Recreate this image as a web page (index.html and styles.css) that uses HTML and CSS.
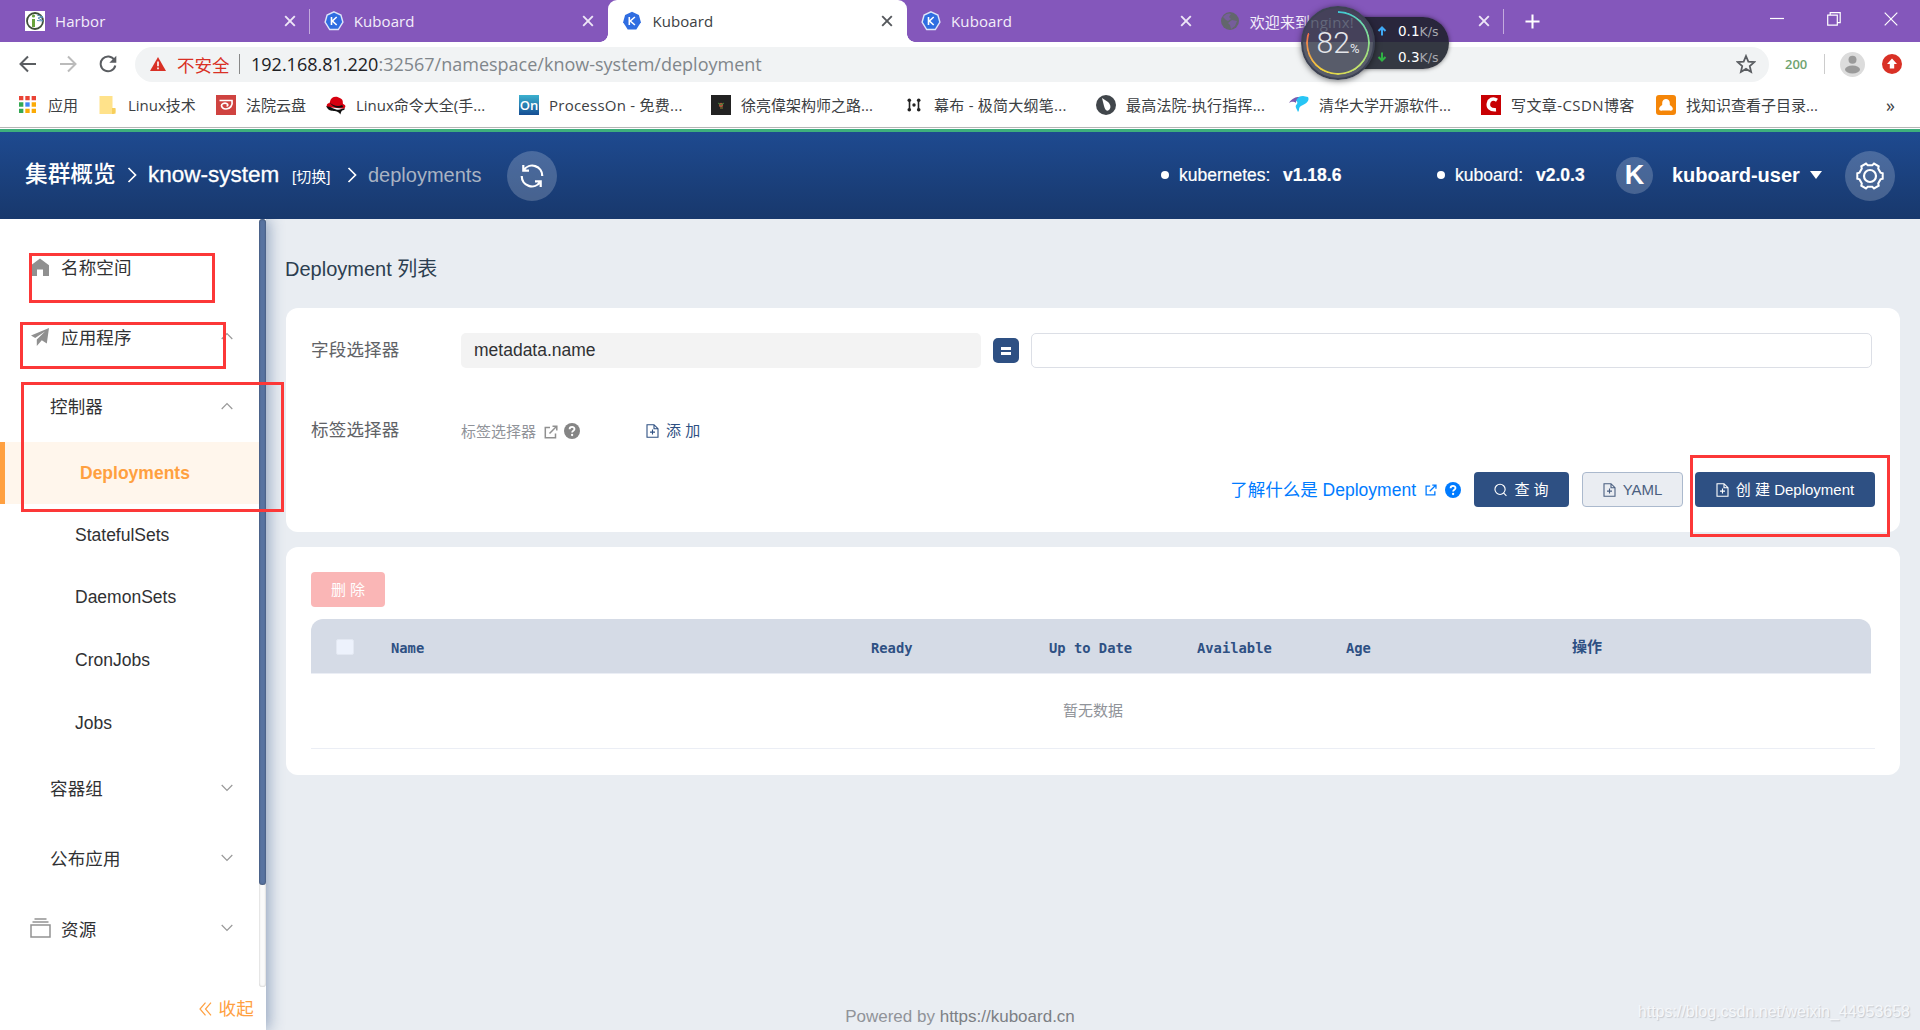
FILE: index.html
```html
<!DOCTYPE html>
<html lang="zh-CN">
<head>
    <meta charset="UTF-8">
    <title>Kuboard</title>
    <link rel="stylesheet" href="styles.css">
</head>
<body>
    <!-- shared icons -->
    <svg class="defs" width="0" height="0">
        <symbol id="i-kuboard" viewBox="0 0 20 20">
            <path d="M10 .8l6.9 3.2 2 7.2-4.6 7.3H5.7L1.1 11.2l2-7.2z" fill="#2f6de1"/>
            <path d="M7.3 6v8M12.9 6l-4.6 4 4.6 4" fill="none" stroke="#fff" stroke-width="1.6"/>
        </symbol>
        <symbol id="i-kuboard-line" viewBox="0 0 20 20">
            <path d="M10 .8l6.9 3.2 2 7.2-4.6 7.3H5.7L1.1 11.2l2-7.2z" fill="#2f6de1" stroke="#dfe6fa" stroke-width="1.4"/>
            <path d="M7.5 6v8M12.7 6l-4.3 4 4.3 4" fill="none" stroke="#fff" stroke-width="1.6"/>
        </symbol>
        <symbol id="i-close" viewBox="0 0 12 12">
            <path d="M1.2 1.2l9.6 9.6M10.8 1.2l-9.6 9.6" fill="none" stroke="currentColor" stroke-width="1.9"/>
        </symbol>
        <symbol id="i-arrow" viewBox="0 0 18 18">
            <path d="M17 9H2M9 1.5L1.5 9 9 16.5" fill="none" stroke="currentColor" stroke-width="2"/>
        </symbol>
        <symbol id="i-down" viewBox="0 0 12 8">
            <path d="M.7 1L6 6.4 11.3 1" fill="none" stroke="#999" stroke-width="1.2"/>
        </symbol>
        <symbol id="i-up" viewBox="0 0 12 8">
            <path d="M.7 7L6 1.6 11.3 7" fill="none" stroke="#999" stroke-width="1.2"/>
        </symbol>
        <symbol id="i-crumb" viewBox="0 0 10 16">
            <path d="M1.5 1l7 7-7 7" fill="none" stroke="#fff" stroke-width="1.7"/>
        </symbol>
        <symbol id="i-out" viewBox="0 0 14 14">
            <path d="M6 2.5H1.3v10.2h10.2V8.5M5.5 8.5L12.2 1.8M8.5 1.2h4.3v4.3" fill="none" stroke="currentColor" stroke-width="1.5"/>
        </symbol>
        <symbol id="i-help" viewBox="0 0 16 16">
            <circle cx="8" cy="8" r="8" fill="currentColor"/>
            <path d="M5.6 6.3c0-3.2 4.9-3.1 4.9-.2 0 1.6-2.4 1.7-2.4 3.4" fill="none" stroke="#fff" stroke-width="1.8"/>
            <circle cx="8.1" cy="12" r="1.15" fill="#fff"/>
        </symbol>
        <symbol id="i-doc" viewBox="0 0 13 14">
            <path d="M1 .7h7l4 4v8.6H1zM8 .7v4h4M6.5 5.6v5M4 8.1h5" fill="none" stroke="currentColor" stroke-width="1.1"/>
        </symbol>
    </svg>

    <div class="tabs">
        <div class="tab">
            <svg class="tab-icon" viewBox="0 0 20 20">
                <rect width="20" height="20" fill="#fff"/>
                <circle cx="10" cy="10" r="8" fill="none" stroke="#3f4f3a" stroke-width="1.8"/>
                <path d="M8.5 8v8" stroke="#68a43c" stroke-width="3"/>
                <circle cx="8.5" cy="5" r="1.6" fill="#68a43c"/>
                <path d="M12 4l6 2-5 1 5 3-6-.5" stroke="#5590b5" fill="none"/>
            </svg>
            <span class="tab-title">Harbor</span>
            <svg class="tab-close"><use href="#i-close"/></svg>
        </div>
        <div class="tab">
            <svg class="tab-icon"><use href="#i-kuboard-line"/></svg>
            <span class="tab-title">Kuboard</span>
            <svg class="tab-close"><use href="#i-close"/></svg>
        </div>
        <div class="tab active">
            <svg class="tab-icon"><use href="#i-kuboard"/></svg>
            <span class="tab-title">Kuboard</span>
            <svg class="tab-close"><use href="#i-close"/></svg>
        </div>
        <div class="tab">
            <svg class="tab-icon"><use href="#i-kuboard-line"/></svg>
            <span class="tab-title">Kuboard</span>
            <svg class="tab-close"><use href="#i-close"/></svg>
        </div>
        <div class="tab">
            <svg class="tab-icon" viewBox="0 0 20 20">
                <circle cx="10" cy="10" r="9" fill="#62666c"/>
                <path d="M3 6c3-4 7-4 8-3l-2 3 2 2-3 2-2-1zM12 9l5 1-2 5-4 3-1-4-2-2z" fill="#8457bb" opacity=".6"/>
            </svg>
            <span class="tab-title">欢迎来到<span class="dim">nginx!</span></span>
            <svg class="tab-close"><use href="#i-close"/></svg>
        </div>
        <svg class="new-tab" viewBox="0 0 16 16"><path d="M8 .5v15M.5 8h15" stroke="#fff" stroke-width="2.2"/></svg>
        <div class="window-buttons">
            <svg viewBox="0 0 14 14"><path d="M0 6.5h14" stroke="#fff" stroke-width="1.2"/></svg>
            <svg viewBox="0 0 14 14"><path d="M.7 3.2h9.6v10H.7zM3.2 3.2V.7h10v10h-2.7" fill="none" stroke="#fff" stroke-width="1.2"/></svg>
            <svg viewBox="0 0 14 14"><path d="M.7.7l12.6 12.6M13.3.7L.7 13.3" stroke="#fff" stroke-width="1.2"/></svg>
        </div>
    </div>

    <div class="toolbar">
        <svg class="nav-icon"><use href="#i-arrow"/></svg>
        <svg class="nav-icon forward"><use href="#i-arrow"/></svg>
        <svg class="nav-icon" viewBox="0 0 18 18"><path d="M15.4 5A7.4 7.4 0 1 0 16.3 10.5" fill="none" stroke="#5a5d61" stroke-width="2"/><path d="M17.3.8v7h-7z" fill="#5a5d61"/></svg>
        <div class="omnibox">
            <svg class="warn" viewBox="0 0 16 14"><path d="M8 0l8 14H0z" fill="#d93025"/><path d="M8 4.6v4.6M8 10.5v1.8" stroke="#fff" stroke-width="1.6"/></svg>
            <span class="insecure">不安全</span>
            <span class="bar"></span>
            <span class="url"><b>192.168.81.220</b>:32567/namespace/know-system/deployment</span>
            <svg class="star" viewBox="0 0 18 18"><path d="M9 1.8l2.1 5 5.4.5-4.1 3.6 1.2 5.3L9 13.4l-4.6 2.8 1.2-5.3L1.5 7.3l5.4-.5z" fill="none" stroke="#5a5d61" stroke-width="1.6"/></svg>
        </div>
        <span class="ext">200</span>
        <span class="bar light"></span>
        <svg class="avatar" viewBox="0 0 25 25"><circle cx="12.5" cy="12.5" r="12.5" fill="#dcdcdc"/><circle cx="12.5" cy="7.8" r="4" fill="#9a9a9a"/><ellipse cx="12.5" cy="17.5" rx="7.5" ry="4" fill="#9a9a9a"/></svg>
        <svg class="update" viewBox="0 0 20 20"><circle cx="10" cy="10" r="10" fill="#d93025"/><path d="M10 4.5l5 5.5h-2.8v4.5H7.8V10H5z" fill="#fff"/></svg>
    </div>

    <div class="bookmarks">
        <div class="bm bm-apps">
            <svg viewBox="0 0 18 18">
                <path d="M0 0h4.6v4.6H0zM6.7 0h4.6v4.6H6.7zM13.4 0H18v4.6h-4.6z" fill="#ea4335"/>
                <path d="M0 6.7h4.6v4.6H0zM0 13.4h4.6V18H0z" fill="#34a853"/>
                <path d="M6.7 6.7h4.6v4.6H6.7z" fill="#4285f4"/>
                <path d="M13.4 6.7H18v4.6h-4.6zM6.7 13.4h4.6V18H6.7zM13.4 13.4H18V18h-4.6z" fill="#fbab05"/>
            </svg>
            应用
        </div>
        <div class="bm bm-folder">
            <svg viewBox="0 0 17 20"><path d="M.5 1h13v12l3 1v5H.5z" fill="#ffe28a"/><path d="M13 13h3.5v4.5L14.500 19H13z" fill="#f7cf5c"/></svg>
            Linux技术
        </div>
        <div class="bm bm-cloud">
            <svg viewBox="0 0 20 20"><path d="M0 0h20v20H0z" fill="#cf4340"/><path d="M3.500 5.500H16c1 5-2 8.500-6 8.500-3 0-4.500-2-4.500-3.500s3-3 5-2 1.500 2.500 0 2.500" fill="none" stroke="#fff" stroke-width="1.7"/></svg>
            法院云盘
        </div>
        <div class="bm bm-redhat">
            <svg viewBox="0 0 21 20"><path d="M1 12C0 7 4 9 4 7c1-6 7-7 11-4 4 2 2 5 3 6 3 1 3 3 1 5z" fill="#d7000f"/><path d="M0 12c4-2 8 3 13 3 3 0 5-2 7-1-1 2-3 1-4 3l-1 3c-2-4-5-3-8-4-3 0-5-1-7-5zM4 7c3 4 9 5 13 3l1 2c-5 2-12 0-14-5z" fill="#111"/></svg>
            Linux命令大全(手...
        </div>
        <div class="bm bm-processon">
            <span class="on">On</span>
            ProcessOn - 免费...
        </div>
        <div class="bm bm-xu">
            <svg viewBox="0 0 20 20"><path d="M0 0h20v20H0z" fill="#222"/><circle cx="10" cy="10" r="2.2" fill="#b0563c"/><path d="M7 8l3 2 3-2" stroke="#3c8a3c" fill="none"/><path d="M9 13h3" stroke="#888030"/></svg>
            徐亮偉架构师之路...
        </div>
        <div class="bm bm-mubu">
            <svg viewBox="0 0 14 14"><path d="M2.500 2v10M11.500 2v10" stroke="#222" stroke-width="1.6"/><g fill="#222"><circle cx="2.3" cy="2.3" r="1.8"/><circle cx="11.7" cy="2.3" r="1.8"/><circle cx="2.3" cy="11.7" r="1.8"/><circle cx="11.7" cy="11.7" r="1.8"/><circle cx="7" cy="7" r="1.7"/></g></svg>
            幕布 - 极简大纲笔...
        </div>
        <div class="bm bm-court">
            <svg viewBox="0 0 20 20"><circle cx="10" cy="10" r="10" fill="#41464b"/><path d="M6 3l6 4c3 3 3 6 1 8-3 2-4-1-5-4z" fill="#fff"/></svg>
            最高法院-执行指挥...
        </div>
        <div class="bm bm-tuna">
            <svg viewBox="0 0 20 20"><path d="M5 5c3-3 6-4 9-4l5 1c2 4-2 7-7 9-3 2-1 4-3 6-1-3-4-5-1-8 1-2 0-3-3-4z" fill="#27c5f5"/><path d="M0 8c3-5 7-6 10-6-3 2-3 4-3 6-3-2-5-1-7 0z" fill="#7a5bb0"/></svg>
            清华大学开源软件...
        </div>
        <div class="bm bm-csdn">
            <svg viewBox="0 0 20 20"><path d="M0 0h20v20H0z" fill="#c80003"/><path d="M16 5.200C7-.5 2.500 16 15 14.700" fill="none" stroke="#fff" stroke-width="3.6"/></svg>
            写文章-CSDN博客
        </div>
        <div class="bm bm-find">
            <svg viewBox="0 0 20 20"><rect width="20" height="20" rx="3" fill="#f58608"/><path d="M6.200 8c0-5.500 7.600-5.500 7.600 0v2c5 3 3 6.500 0 5.500H6.200c-3 1-5-2.500 0-5.500z" fill="#fff"/></svg>
            找知识查看子目录...
        </div>
        <span class="more">»</span>
    </div>

    <div class="header">
        <span class="crumb">集群概览</span>
        <svg class="crumb-sep first"><use href="#i-crumb"/></svg>
        <span class="crumb ns">know-system</span>
        <span class="switch">[切换]</span>
        <svg class="crumb-sep second"><use href="#i-crumb"/></svg>
        <span class="crumb page">deployments</span>
        <div class="round">
            <svg viewBox="0 0 24 24"><path d="M3.300 1v5.700H9M3.800 6.200A10 10 0 0 1 22.200 12M20.700 23v-5.700H15M20.200 17.800A10 10 0 0 1 1.800 12" fill="none" stroke="#fff" stroke-width="2.2"/></svg>
        </div>
        <div class="version kube"><i></i><span>kubernetes:</span><b>v1.18.6</b></div>
        <div class="version kub"><i></i><span>kuboard:</span><b>v2.0.3</b></div>
        <div class="user-icon">K</div>
        <span class="user-name">kuboard-user</span>
        <span class="caret"></span>
        <div class="round gear">
            <svg viewBox="0 0 28 28"><path d="M26.700 11.300v5.400l-2.200.7-2.300 4 .5 2.300-4.700 2.700-1.700-1.600h-4.600L10 26.400l-4.700-2.700.5-2.300-2.300-4-2.200-.7v-5.400l2.200-.7 2.300-4-.5-2.300L10 1.600l1.700 1.600h4.600L18 1.600l4.700 2.700-.5 2.300 2.300 4z" fill="none" stroke="#fff" stroke-width="2"/><circle cx="14" cy="14" r="6" fill="none" stroke="#fff" stroke-width="2.2"/></svg>
        </div>
    </div>

    <div class="app">
        <div class="sidebar">
            <div class="menu">
                <div class="item">
                    <svg class="menu-icon" viewBox="0 0 18 18"><path d="M9 .5l9 6.800V18h-6v-6.500H6V18H0V7.300z" fill="#909090"/></svg>
                    <span>名称空间</span>
                </div>
                <div class="item">
                    <svg class="menu-icon" viewBox="0 0 18 18"><path d="M0 7.500L18 0l-2.200 15.500-5-3.300-5 5.800v-6.500L14 3.500 4.200 10z" fill="#909090"/></svg>
                    <span>应用程序</span>
                    <svg class="chevron"><use href="#i-up"/></svg>
                </div>
                <div class="item sub">
                    <span>控制器</span>
                    <svg class="chevron"><use href="#i-up"/></svg>
                </div>
                <div class="leaf active"><span>Deployments</span></div>
                <div class="leaf"><span>StatefulSets</span></div>
                <div class="leaf"><span>DaemonSets</span></div>
                <div class="leaf"><span>CronJobs</span></div>
                <div class="leaf"><span>Jobs</span></div>
                <div class="item sub">
                    <span>容器组</span>
                    <svg class="chevron"><use href="#i-down"/></svg>
                </div>
                <div class="item sub">
                    <span>公布应用</span>
                    <svg class="chevron"><use href="#i-down"/></svg>
                </div>
                <div class="item">
                    <svg class="menu-icon box" viewBox="0 0 21 20"><path d="M1 7h19v12H1zM2.500 4h16M4.500 1h12" fill="none" stroke="#929292" stroke-width="1.5"/></svg>
                    <span>资源</span>
                    <svg class="chevron"><use href="#i-down"/></svg>
                </div>
            </div>
            <div class="collapse">
                <svg viewBox="0 0 13 14"><path d="M6.500.7L1 7l5.500 6.300M12 .7L6.500 7l5.500 6.300" fill="none" stroke="#ffa040" stroke-width="1.2"/></svg>
                <span>收起</span>
            </div>
            <div class="scrollbar"><div class="thumb"></div></div>
        </div>

        <div class="main">
            <div class="title">Deployment 列表</div>

            <div class="card filter">
                <div class="row">
                    <label>字段选择器</label>
                    <div class="field">metadata.name</div>
                    <div class="equal"><i></i><i></i></div>
                    <div class="value"></div>
                </div>
                <div class="row labels">
                    <label>标签选择器</label>
                    <span class="hint">标签选择器</span>
                    <svg class="out"><use href="#i-out"/></svg>
                    <svg class="help"><use href="#i-help"/></svg>
                    <div class="add"><svg><use href="#i-doc"/></svg><span>添 加</span></div>
                </div>
                <div class="actions">
                    <div class="learn">
                        <span>了解什么是 Deployment</span>
                        <svg class="out"><use href="#i-out"/></svg>
                        <svg class="help"><use href="#i-help"/></svg>
                    </div>
                    <div class="btn primary query"><svg viewBox="0 0 14 14"><circle cx="6.5" cy="6.3" r="5.5" fill="none" stroke="#fff" stroke-width="1.2"/><path d="M10.200 10.200l3.200 3.200" stroke="#fff" stroke-width="1.2"/></svg><span>查 询</span></div>
                    <div class="btn yaml"><svg><use href="#i-doc"/></svg>YAML</div>
                    <div class="btn primary create"><svg><use href="#i-doc"/></svg><span>创 建 Deployment</span></div>
                </div>
            </div>

            <div class="card list">
                <div class="btn delete"><span>删 除</span></div>
                <div class="table-head">
                    <i class="checkbox"></i>
                    <span>Name</span>
                    <span>Ready</span>
                    <span>Up to Date</span>
                    <span>Available</span>
                    <span>Age</span>
                    <span class="op">操作</span>
                </div>
                <div class="empty">暂无数据</div>
            </div>

            <div class="footer">Powered by <span>https://kuboard.cn</span></div>
        </div>
    </div>

    <!-- desktop overlays -->
    <div class="monitor">
        <div class="speed">
            <div><svg viewBox="0 0 10 10"><path d="M5 9.500V2M1.500 5L5 1.500 8.500 5" fill="none" stroke="#3fa9f5" stroke-width="2"/></svg><b>0.1</b>K/s</div>
            <div><svg viewBox="0 0 10 10"><path d="M5 .5V8M1.500 5L5 8.500 8.500 5" fill="none" stroke="#2fb344" stroke-width="2"/></svg><b>0.3</b>K/s</div>
        </div>
        <div class="gauge"><div class="ring"></div><span>82</span><small>%</small></div>
    </div>
    <div class="mark mark-ns"></div>
    <div class="mark mark-app"></div>
    <div class="mark mark-ctl"></div>
    <div class="mark mark-create"></div>
    <div class="watermark">https://blog.csdn.net/weixin_44953658</div>
</body>
</html>
```
FILE: styles.css
```css
* {
    box-sizing: border-box;
}

body {
    margin: 0;
    width: 1920px;
    height: 1030px;
    overflow: hidden;
    position: relative;
    display: flex;
    flex-direction: column;
    background: #e9edf2;
    font-family: "Liberation Sans", "Noto Sans CJK SC", sans-serif;
    font-size: 17.5px;
    color: #303133;
    white-space: nowrap;
}

svg {
    display: block;
    flex: none;
}

.defs {
    position: absolute;
}

/* browser tabs */
.tabs {
    height: 42px;
    flex: none;
    display: flex;
    align-items: center;
    padding-left: 11px;
    background: #8457bb;
    font: 15px "Open Sans", "Noto Sans CJK SC", sans-serif;
    color: #f3eefa;
}

.tab {
    width: 298.7px;
    height: 42px;
    display: flex;
    align-items: center;
    padding: 0 14px;
    position: relative;
}

.tab:nth-child(1)::after,
.tab:nth-child(5)::after {
    content: "";
    position: absolute;
    right: 0;
    top: 9px;
    width: 1px;
    height: 25px;
    background: #c3abdd;
}

.tab.active {
    background: #fff;
    color: #3c4043;
    border-radius: 9px 9px 0 0;
}

.tab.active::before,
.tab.active::after {
    content: "";
    position: absolute;
    bottom: 0;
    width: 8px;
    height: 8px;
}

.tab.active::before {
    left: -8px;
    background: radial-gradient(circle at 0 0, transparent 7.5px, #fff 8px);
}

.tab.active::after {
    right: -8px;
    background: radial-gradient(circle at 100% 0, transparent 7.5px, #fff 8px);
}

.tab-icon {
    width: 20px;
    height: 20px;
    margin-right: 10px;
}

.tab-title {
    flex: 1;
    letter-spacing: 0.1px;
}

/* part of the title seen through the gauge */
.dim {
    position: relative;
    z-index: 2;
    letter-spacing: 0.3px;
    color: #62677a;
}

.tab-close {
    width: 12px;
    height: 12px;
    color: #eee6f7;
}

.active .tab-close {
    color: #55585c;
}

.new-tab {
    width: 15px;
    height: 15px;
    margin-left: 21px;
}

.window-buttons {
    display: flex;
    gap: 43px;
    margin-left: auto;
    padding: 0 22px 5px 0;
}

.window-buttons svg {
    width: 14px;
    height: 14px;
}

/* address bar */
.toolbar {
    height: 44px;
    flex: none;
    display: flex;
    align-items: center;
    padding-left: 19px;
    background: #fff;
    font: 17.5px "Open Sans", "Noto Sans CJK SC", sans-serif;
    color: #5a5d61;
}

.nav-icon {
    width: 18px;
    height: 18px;
    margin-right: 22px;
}

.forward {
    transform: scaleX(-1);
    color: #bbb;
}

.omnibox {
    width: 1634px;
    height: 35px;
    display: flex;
    align-items: center;
    padding-left: 15px;
    margin-left: -4px;
    background: #f1f3f4;
    border-radius: 18px;
}

.warn {
    width: 16px;
    height: 14px;
}

.insecure {
    width: 62px;
    margin-left: 11px;
    color: #d93025;
}

.bar {
    width: 1px;
    height: 20px;
    background: #888;
}

.url {
    margin-left: 11px;
    font-size: 18px;
    color: #80868b;
}

.url b {
    font-weight: normal;
    color: #202124;
}

.star {
    width: 20px;
    height: 20px;
    margin: 0 13px 0 auto;
}

.ext {
    width: 39px;
    margin-left: 16px;
    font-size: 13px;
    font-weight: 600;
    color: #6fa36f;
}

.bar.light {
    background: #ccc;
}

.avatar {
    width: 25px;
    height: 25px;
    margin-left: 15px;
}

.update {
    width: 20px;
    height: 20px;
    margin-left: 17px;
}

/* bookmarks */
.bookmarks {
    height: 42px;
    flex: none;
    display: flex;
    align-items: center;
    padding: 0 0 4px 19px;
    background: #fff;
    border-bottom: 1px solid #b6b6b6;
    font: 15px "Open Sans", "Noto Sans CJK SC", sans-serif;
    color: #3c4043;
}

.bm {
    display: flex;
    align-items: center;
    gap: 10px;
    flex: none;
}

.bm svg,
.on {
    width: 20px;
    height: 20px;
}

.bm-apps {
    width: 80px;
}

.bm.bm-apps svg {
    width: 17px;
    height: 17px;
    margin-right: 2px;
}

.bm-folder {
    width: 117px;
}

.bm.bm-folder svg {
    width: 17px;
    margin-right: 2px;
}

.bm-cloud {
    width: 110px;
}

.bm-redhat {
    width: 193px;
}

.bm-processon {
    width: 192px;
    letter-spacing: 0.25px;
}

.bm-xu {
    width: 196px;
}

.bm-mubu {
    width: 189px;
    letter-spacing: 0.25px;
}

.bm.bm-mubu svg {
    width: 14px;
    height: 14px;
    margin-right: 3px;
}

.bm-court {
    width: 193px;
    letter-spacing: 0.2px;
}

.bm-tuna {
    width: 192px;
}

.bm-csdn {
    width: 175px;
    letter-spacing: 0.4px;
}

.bm-find {
    width: 230px;
}

.on {
    background: linear-gradient(#3cb1cf, #154e94);
    color: #fff;
    font-size: 13px;
    font-weight: 600;
    line-height: 20px;
    text-align: center;
    letter-spacing: 0;
}

.more {
    font-size: 18px;
}

/* kuboard header */
.header {
    height: 90px;
    flex: none;
    display: flex;
    align-items: center;
    padding: 0 25px;
    margin-top: 1px;
    background: linear-gradient(#1e4a90, #18386c);
    border-top: 3px solid #3eaf7c;
    box-shadow: 0 -1px 0 #fff;
    color: #fff;
}

.crumb {
    width: 91px;
    padding-bottom: 6px;
    font-size: 22.7px;
    font-weight: 500;
}

.crumb-sep {
    width: 10px;
    height: 16px;
    margin-bottom: 2px;
}

.crumb-sep.first {
    margin-left: 11px;
    margin-right: 11px;
}

.crumb-sep.second {
    margin-left: 17px;
    margin-right: 11px;
}

.crumb.ns {
    width: 144px;
    padding-bottom: 2px;
    font-size: 22.5px;
    -webkit-text-stroke: 0.3px #fff;
}

.switch {
    width: 38px;
    padding-bottom: 1px;
    font-size: 15px;
}

.crumb.page {
    width: 139px;
    padding-bottom: 1px;
    font-size: 20px;
    font-weight: normal;
    color: #a9b3c3;
}

.round {
    width: 50px;
    height: 50px;
    border-radius: 50%;
    display: flex;
    align-items: center;
    justify-content: center;
    background: rgba(255, 255, 255, 0.2);
}

.round svg {
    width: 24px;
    height: 24px;
}

.version {
    display: flex;
    align-items: center;
    -webkit-text-stroke: 0.2px #fff;
}

.version i {
    width: 8px;
    height: 8px;
    border-radius: 50%;
    background: #fff;
    margin: 0 10px 2px 0;
}

.kube {
    width: 276px;
    margin-left: 604px;
}

.kube span {
    width: 104px;
}

.kub {
    width: 179px;
}

.kub span {
    width: 81px;
}

.user-icon {
    width: 37px;
    height: 37px;
    border-radius: 50%;
    background: rgba(255, 255, 255, 0.2);
    font-size: 27px;
    font-weight: bold;
    line-height: 37px;
    text-align: center;
}

.user-name {
    width: 138px;
    margin-left: 19px;
    font-size: 20px;
    font-weight: bold;
}

.caret {
    border: 6px solid transparent;
    border-top: 8px solid #fff;
    border-bottom: 0;
    margin-bottom: 1px;
}

.gear {
    margin-left: auto;
}

.gear svg {
    width: 28px;
    height: 28px;
}

/* sidebar */
.app {
    flex: 1;
    display: flex;
    min-height: 0;
}

.sidebar {
    width: 266px;
    flex: none;
    position: relative;
    display: flex;
    flex-direction: column;
    background: #fff;
    box-shadow: 3px 0 14px rgba(46, 80, 131, 0.45);
    clip-path: inset(0 -30px 0 0);
}

.menu {
    padding-top: 13px;
    flex: 1;
}

.item {
    height: 70px;
    display: flex;
    align-items: center;
    padding: 0 33px 0 31px;
}

.item span {
    padding-bottom: 2px;
    letter-spacing: 0.15px;
}

.item.sub {
    padding-left: 50px;
}

.item.sub span {
    padding-bottom: 4px;
}

.menu-icon {
    width: 18px;
    height: 18px;
    margin-right: 12px;
}

.menu-icon.box {
    width: 21px;
    height: 20px;
    margin: 0 10px 2px -1px;
}

.chevron {
    width: 12px;
    height: 8px;
    margin: 0 0 2px auto;
}

.leaf {
    height: 62.6px;
    display: flex;
    align-items: center;
    padding-left: 75px;
}

.leaf.active {
    height: 62px;
    border-left: 5px solid #ffa040;
    background: #fff6ec;
    color: #ffa040;
    font-weight: bold;
}

.collapse {
    height: 43px;
    display: flex;
    gap: 6px;
    align-items: center;
    justify-content: flex-end;
    padding-right: 12px;
    color: #ffa040;
}

.collapse span {
    padding-bottom: 3px;
    letter-spacing: 0.3px;
}

.collapse svg {
    width: 13px;
    height: 14px;
}

.scrollbar {
    position: absolute;
    top: 0;
    right: 0;
    width: 7px;
    height: 768px;
    border-radius: 4px;
    background: #fafafa;
    box-shadow: inset 0 0 2px rgba(0, 0, 0, 0.3);
}

.thumb {
    height: 666px;
    border-radius: 4px;
    background: #5873a0;
    box-shadow: inset 0 0 2px rgba(0, 0, 0, 0.5);
}

/* content */
.main {
    flex: 1;
    padding: 0 20px 0 20px;
    display: flex;
    flex-direction: column;
}

.title {
    height: 89px;
    margin-left: -1px;
    padding-top: 10px;
    line-height: 80px;
    font-size: 20px;
    color: #2c3e50;
}

.card {
    background: #fff;
    border-radius: 12px;
    padding: 25px;
    margin-bottom: 15px;
}

.filter {
    height: 224px;
}

.row {
    height: 35px;
    display: flex;
    align-items: center;
    padding-right: 3px;
}

.row label {
    width: 150px;
    padding-bottom: 4px;
    letter-spacing: 0.2px;
    color: #606266;
}

.field {
    width: 520px;
    height: 35px;
    padding-left: 13px;
    line-height: 35px;
    border-radius: 5px;
    background: #f3f3f3;
}

.equal {
    width: 26px;
    height: 25px;
    margin: 0 12px;
    border-radius: 5px;
    background: #2e5083;
    display: flex;
    flex-direction: column;
    align-items: center;
    justify-content: center;
    gap: 2px;
}

.equal i {
    width: 10px;
    height: 3px;
    background: #fff;
}

.value {
    flex: 1;
    height: 35px;
    border: 1px solid #dcdfe6;
    border-radius: 5px;
}

.row.labels {
    margin-top: 45px;
}

.hint {
    width: 83px;
    font-size: 15px;
    color: #909399;
}

.labels .out {
    width: 14px;
    height: 14px;
    margin-top: 2px;
    color: #909090;
}

.labels .help {
    width: 16px;
    height: 16px;
    margin: 1px 66px 0 6px;
    color: #858585;
}

.add {
    display: flex;
    align-items: center;
    gap: 7px;
    font-size: 15px;
    color: #2e5083;
}

.add span,
.btn span {
    padding-bottom: 2px;
}

.add svg,
.btn svg {
    width: 13px;
    height: 14px;
}

.actions {
    display: flex;
    justify-content: flex-end;
    margin-top: 24px;
}

.learn {
    display: flex;
    align-items: center;
    color: #007bff;
    margin-right: 13px;
}

.learn span {
    padding-bottom: 2px;
}

.learn .out {
    width: 12px;
    height: 12px;
    margin: 0 8px 0 9px;
}

.learn .help {
    width: 16px;
    height: 16px;
}

.btn {
    height: 35px;
    display: flex;
    align-items: center;
    justify-content: center;
    gap: 7px;
    border-radius: 4px;
    font-size: 15px;
    color: #fff;
}

.primary {
    background: #2e5083;
}

.query {
    width: 95px;
}

.yaml {
    width: 101px;
    margin: 0 12px 0 13px;
    border: 1px solid #abb9cd;
    background: #eaedf2;
    color: #4a5f80;
}

.create {
    width: 180px;
}

/* table */
.list {
    height: 228px;
}

.delete {
    width: 74px;
    background: #fab6b6;
}

.table-head {
    height: 55px;
    width: 1560px;
    margin-top: 12px;
    display: grid;
    grid-template-columns: 80px 480px 178px 148px 149px 225px 1fr;
    align-items: center;
    border-radius: 12px 12px 0 0;
    border-bottom: 1px solid #ebeef5;
    background: #d5dbe6;
    font: bold 13.8px "DejaVu Sans Mono", "Noto Sans CJK SC", monospace;
    color: #2e5083;
}

.table-head span {
    padding-top: 4px;
}

.table-head .op {
    padding: 0 0 1px 1px;
    font-size: 15px;
}

.checkbox {
    width: 18px;
    height: 16px;
    margin: 2px 0 0 25px;
    border: 1px solid #e3e8f2;
    border-radius: 2px;
    background: #edf2fc;
}

.empty {
    height: 75px;
    line-height: 73px;
    border-bottom: 1px solid #ebeef5;
    text-align: center;
    font-size: 15px;
    color: #909399;
}

.footer {
    margin: auto 0 3px;
    padding-right: 266px;
    text-align: center;
    font-size: 17px;
    color: #909399;
}

.footer span {
    color: #7c7f84;
}

/* overlays */
.monitor {
    position: absolute;
    z-index: 1;
    left: 1301px;
    top: 6px;
    width: 148px;
    height: 74px;
}

.speed {
    position: absolute;
    left: 37px;
    top: 11px;
    width: 111px;
    height: 52px;
    padding: 1px 0 0 39px;
    border-radius: 26px;
    background: linear-gradient(#29263c 48%, #343842 49%);
    box-shadow: 0 0 4px rgba(0, 0, 0, 0.5);
    font: 12.5px "DejaVu Sans", sans-serif;
    color: #a6a8af;
}

.speed div {
    height: 26px;
    display: flex;
    align-items: center;
}

.speed svg {
    width: 10px;
    height: 10px;
    margin-right: 11px;
}

.speed b {
    font-weight: normal;
    font-size: 13.5px;
    color: #fff;
}

.gauge {
    position: absolute;
    left: 0;
    top: 0;
    width: 74px;
    height: 74px;
    border-radius: 50%;
    background: linear-gradient(#45415a 48%, #585c6a 49%);
    border: 2px solid #3d4253;
    box-shadow: 0 1px 6px rgba(0, 0, 0, 0.5);
    display: flex;
    align-items: baseline;
    justify-content: center;
    font-family: Roboto, sans-serif;
    font-weight: 300;
    color: #e4e6ea;
}

.gauge span {
    font-size: 30px;
    line-height: 70px;
}

.gauge small {
    font-size: 13px;
    font-weight: 400;
}

.ring {
    position: absolute;
    inset: 3px;
    border-radius: 50%;
    background: conic-gradient(#3cc8d8, #8fe08a 25%, #c5e36a 40%, #f0d23c 58%, #f39a4a 72%, #ee6a4a 80%, transparent 80%);
    -webkit-mask: radial-gradient(circle, transparent 29.5px, #000 30.5px);
    mask: radial-gradient(circle, transparent 29.5px, #000 30.5px);
}

.mark {
    position: absolute;
    border: 3px solid #fc3838;
}

.mark-ns {
    left: 29px;
    top: 253px;
    width: 186px;
    height: 50px;
}

.mark-app {
    left: 20px;
    top: 322px;
    width: 206px;
    height: 47px;
}

.mark-ctl {
    left: 21px;
    top: 382px;
    width: 263px;
    height: 130px;
}

.mark-create {
    left: 1690px;
    top: 455px;
    width: 200px;
    height: 82px;
}

.watermark {
    position: absolute;
    right: 10px;
    bottom: 9px;
    font-size: 16px;
    color: #f5f7fa;
    text-shadow: 1px 1px 1px #c4c8ce;
}
```
